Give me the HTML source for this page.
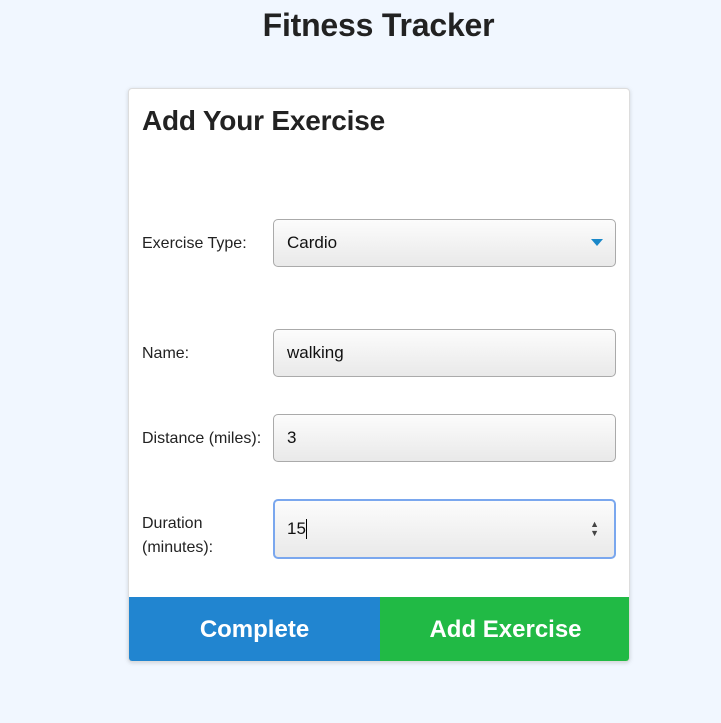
<!DOCTYPE html>
<html><head><style>
*{box-sizing:border-box;margin:0;padding:0}
body{width:721px;height:723px;background:#f1f7ff;font-family:"Liberation Sans",sans-serif;position:relative;overflow:hidden}
h1{position:absolute;top:7px;left:0;width:757px;text-align:center;font-size:32px;font-weight:bold;color:#222;letter-spacing:-0.2px}
.card{position:absolute;left:128px;top:88px;width:502px;height:574px;background:#fff;border:1px solid #ddd;border-radius:4px;box-shadow:0 1px 4px rgba(0,0,0,.15);overflow:hidden}
h2{position:absolute;left:13px;top:16px;font-size:28px;font-weight:bold;color:#222;letter-spacing:-0.2px}
.lbl{position:absolute;left:13px;font-size:16px;color:#222;line-height:24px}
.inp{position:absolute;left:144px;width:343px;border:1px solid #aaa;border-radius:5px;background:linear-gradient(#fcfcfc,#e9e9e9);font-size:17px;color:#111;padding-left:13px;display:flex;align-items:center}
.btn{position:absolute;top:508px;height:65px;width:251px;color:#fff;font-size:24px;font-weight:bold;display:flex;align-items:center;justify-content:center}
</style></head><body>
<h1>Fitness Tracker</h1>
<div class="card">
<h2>Add Your Exercise</h2>
<div class="lbl" style="top:143px">Exercise Type:</div>
<div class="inp" style="top:130px;height:48px">Cardio<span style="position:absolute;right:12px;top:19px;width:0;height:0;border-left:6px solid transparent;border-right:6px solid transparent;border-top:7px solid #1a88c9"></span></div>
<div class="lbl" style="top:253px">Name:</div>
<div class="inp" style="top:240px;height:48px">walking</div>
<div class="lbl" style="top:338px">Distance (miles):</div>
<div class="inp" style="top:325px;height:48px">3</div>
<div class="lbl" style="top:423px">Duration<br>(minutes):</div>
<div class="inp" style="top:410px;height:60px;border:2px solid #7aa7ee;padding-left:12px">15<span style="display:inline-block;width:1px;height:20px;background:#000"></span><span style="position:absolute;right:15px;top:19px;font-size:9px;line-height:9px;color:#444">▲<br>▼</span></div>
<div class="btn" style="left:0;background:#2185d0">Complete</div>
<div class="btn" style="left:251px;background:#21ba45">Add Exercise</div>
</div>
</body></html>
